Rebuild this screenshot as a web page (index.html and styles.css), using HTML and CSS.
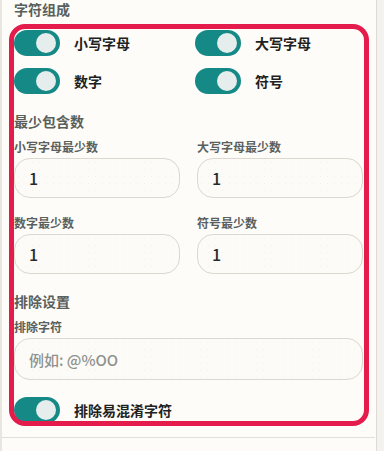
FILE: index.html
```html
<!DOCTYPE html>
<html lang="zh-CN">
<head>
<meta charset="utf-8">
<link rel="stylesheet" href="styles.css">
</head>
<body>
<div class="page">
  <div class="left-strip"></div>
  <div class="panel">
    <section class="section">
      <h3 class="sec-title">字符组成</h3>
      <div class="toggle-grid">
        <label class="toggle-row"><span class="switch"><span class="knob"></span></span><span class="toggle-text">小写字母</span></label>
        <label class="toggle-row"><span class="switch"><span class="knob"></span></span><span class="toggle-text">大写字母</span></label>
        <label class="toggle-row"><span class="switch"><span class="knob"></span></span><span class="toggle-text">数字</span></label>
        <label class="toggle-row"><span class="switch"><span class="knob"></span></span><span class="toggle-text">符号</span></label>
      </div>

      <h3 class="sec-title sub">最少包含数</h3>
      <div class="field-grid">
        <div class="field">
          <div class="field-label">小写字母最少数</div>
          <div class="input"><span class="value">1</span></div>
        </div>
        <div class="field">
          <div class="field-label">大写字母最少数</div>
          <div class="input"><span class="value">1</span></div>
        </div>
        <div class="field">
          <div class="field-label">数字最少数</div>
          <div class="input"><span class="value">1</span></div>
        </div>
        <div class="field">
          <div class="field-label">符号最少数</div>
          <div class="input"><span class="value">1</span></div>
        </div>
      </div>

      <h3 class="sec-title sub">排除设置</h3>
      <div class="field">
        <div class="field-label">排除字符</div>
        <div class="input tall"><span class="placeholder">例如: @%OO</span></div>
      </div>
      <label class="toggle-row single"><span class="switch"><span class="knob"></span></span><span class="toggle-text">排除易混淆字符</span></label>
    </section>
    <section class="section next">
      <h3 class="sec-title">结果</h3>
    </section>
    <div class="highlight"></div>
  </div>
  <div class="track"></div>
</div>
</body>
</html>
```

FILE: styles.css
```css
* { box-sizing: border-box; }
html, body {
  margin: 0;
  padding: 0;
  height: 451px;
  overflow: hidden;
  background: #f4f2ed;
  font-family: "Noto Sans CJK SC", "Noto Sans", sans-serif;
}
.page {
  display: flex;
  height: 451px;
}
.left-strip {
  width: 2px;
  background: #e9e6e0;
  flex: none;
}
.panel {
  position: relative;
  width: 374px;
  flex: none;
  background: #fdfcf9;
  padding: 0 13px 0 12px;
  overflow: hidden;
}
.track {
  flex: 1;
  background: #f4f2ee;
  border-left: 1px solid #dedad3;
}
.section {
  padding-bottom: 14px;
  border-bottom: 1px solid #e2dfd8;
  margin: 0 -12px 0 -12px;
  padding-left: 12px;
  padding-right: 12px;
}
.section.next {
  border-bottom: none;
  padding-top: 10px;
}
.sec-title {
  margin: 0;
  font-size: 14px;
  line-height: 18px;
  font-weight: 700;
  color: #59605c;
}
.sec-title.sub {
  margin-top: 18px;
}
.toggle-grid {
  margin-top: 12px;
  display: grid;
  grid-template-columns: 1fr 1fr;
  column-gap: 13px;
  row-gap: 12px;
}
.toggle-row {
  display: flex;
  align-items: center;
  gap: 14px;
  height: 26px;
}
.toggle-row.single {
  margin-top: 17px;
}
.switch {
  position: relative;
  width: 46px;
  height: 26px;
  border-radius: 13px;
  background: #148986;
  flex: none;
}
.knob {
  position: absolute;
  right: 4px;
  top: 3px;
  width: 20px;
  height: 20px;
  border-radius: 50%;
  background: #e5eeec;
}
.toggle-text {
  font-size: 14px;
  font-weight: 700;
  color: #1d2220;
}
.field-grid {
  margin-top: 9px;
  display: grid;
  grid-template-columns: 1fr 1fr;
  column-gap: 17px;
  row-gap: 17px;
}
.sub + .field {
  margin-top: 9px;
}
.field-label {
  font-size: 12px;
  line-height: 16px;
  font-weight: 700;
  color: #5a605d;
  margin-bottom: 3px;
}
.input {
  height: 40px;
  border: 1px solid #dcd7cf;
  border-radius: 16px;
  background-color: #fcfbf7;
  background-image: radial-gradient(circle, rgba(120, 110, 90, 0.07) 0.7px, transparent 1px);
  background-size: 7px 7px;
  display: flex;
  align-items: center;
  padding-left: 14px;
}
.input.tall {
  height: 42px;
  margin-top: 1px;
}
.value {
  font-size: 16px;
  font-weight: 500;
  color: #262b29;
}
.placeholder {
  font-size: 15px;
  font-weight: 500;
  color: #8f918d;
}
.highlight {
  position: absolute;
  left: 7px;
  top: 24px;
  width: 360px;
  height: 402px;
  border: 5px solid #e31c4b;
  border-radius: 16px;
  pointer-events: none;
}
```
